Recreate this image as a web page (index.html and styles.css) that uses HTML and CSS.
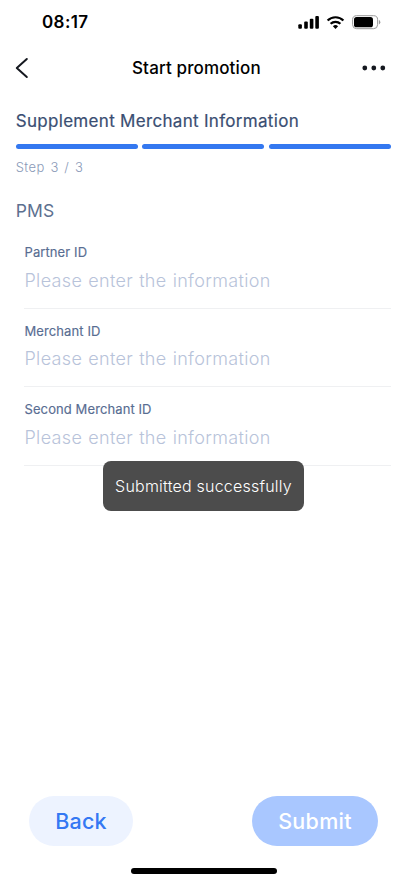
FILE: index.html
```html
<!DOCTYPE html>
<html lang="en">
<head>
<meta charset="utf-8">
<title>Start promotion</title>
<link rel="stylesheet" href="styles.css">
</head>
<body>
<div class="screen">
  <header class="status">
    <span class="time">08:17</span>
    <svg class="status-icons" width="84" height="16" viewBox="0 0 84 16">
      <rect x="0.3" y="9.2" width="3.6" height="4.6" rx="1"/>
      <rect x="6.2" y="6.6" width="3.6" height="7.2" rx="1"/>
      <rect x="11.8" y="3.8" width="3.6" height="10" rx="1"/>
      <rect x="17.3" y="1" width="3.6" height="12.8" rx="1"/>
      <g fill="none" stroke="#000" stroke-width="2.2">
        <path d="M29.6 5.5a11.2 11.2 0 0 1 15.8 0"/>
        <path d="M32.6 8.8a7 7 0 0 1 9.8 0"/>
      </g>
      <path d="M37.5 14l-2.6-2.7a3.8 3.8 0 0 1 5.2 0z"/>
      <rect x="54.6" y="0.7" width="25" height="13" rx="4" fill="none" stroke="#999"/>
      <rect x="56" y="2.1" width="19" height="10.2" rx="2.6"/>
      <path d="M80.9 5v4.4a2.4 2.4 0 0 0 0-4.4z" fill="#999"/>
    </svg>
  </header>
  <nav class="nav">
    <svg class="chevron" width="14" height="22" viewBox="0 0 14 22"><path d="M11.8 2L1.8 11l10 9" fill="none" stroke="#15181f" stroke-width="2" stroke-linecap="round" stroke-linejoin="round"/></svg>
    <h1 class="title">Start promotion</h1>
    <svg class="more" width="24" height="6" viewBox="0 0 24 6" fill="#15181f"><circle cx="2.8" cy="3" r="2.4"/><circle cx="11.8" cy="3" r="2.4"/><circle cx="20.8" cy="3" r="2.4"/></svg>
  </nav>
  <main class="content">
    <h2 class="heading">Supplement Merchant Information</h2>
    <div class="steps"><i></i><i></i><i></i></div>
    <p class="step-label">Step 3 / 3</p>
    <h3 class="section">PMS</h3>
    <div class="fields">
      <div class="field"><span class="label">Partner ID</span><span class="placeholder">Please enter the information</span></div>
      <div class="field"><span class="label">Merchant ID</span><span class="placeholder">Please enter the information</span></div>
      <div class="field"><span class="label">Second Merchant ID</span><span class="placeholder">Please enter the information</span></div>
    </div>
  </main>
  <footer class="actions">
    <div class="btn back">Back</div>
    <div class="btn submit">Submit</div>
  </footer>
  <div class="home"></div>
  <div class="toast">Submitted successfully</div>
</div>
</body>
</html>
```

FILE: styles.css
```css
* { box-sizing: border-box; margin: 0; padding: 0; }
body { background: #fff; font-family: Inter, "Liberation Sans", sans-serif; overflow: hidden; }
.screen { position: relative; width: 400px; height: 874px; display: flex; flex-direction: column; overflow: hidden; white-space: nowrap; }
.status { height: 44px; display: flex; justify-content: space-between; padding: 12px 18px 0 42px; flex: none; }
.time { font-size: 17px; font-weight: 600; line-height: 21px; letter-spacing: 0.4px; }
.status-icons { margin-top: 3px; }
.nav { height: 48px; display: flex; align-items: center; padding: 0 14px 0 15px; flex: none; }
.title { font-size: 17px; font-weight: 500; line-height: 24px; margin-left: 103px; letter-spacing: 0.14px; }
.more { margin-left: auto; }
.content { flex: 1; padding: 17px 9px 0 15.7px; }
.heading { font-size: 17px; font-weight: 400; line-height: 24px; letter-spacing: 0.31px; color: #3a4e72; -webkit-text-stroke: 0.2px #3a4e72; }
.steps { display: grid; grid-template-columns: repeat(3, 1fr); gap: 4.5px; margin-top: 11px; }
.steps i { height: 5px; border-radius: 2.5px; background: #3478f0; }
.step-label { margin-top: 8px; font-size: 13px; font-weight: 300; line-height: 20px; letter-spacing: 0.45px; word-spacing: 1.5px; color: #8a9ab8; }
.section { margin-top: 21px; font-size: 17.5px; font-weight: 400; line-height: 26px; letter-spacing: 0.2px; color: #5c7090; }
.fields { margin-left: 8.8px; margin-top: 6.6px; }
.field { height: 78.4px; padding-top: 11.6px; display: flex; flex-direction: column; border-bottom: 1.5px solid #eff0f2; }
.label { font-size: 13px; font-weight: 400; line-height: 20px; letter-spacing: 0.1px; color: #586d92; -webkit-text-stroke: 0.15px #586d92; }
.placeholder { margin-top: 5.6px; font-size: 18px; font-weight: 300; line-height: 26px; letter-spacing: 0.33px; word-spacing: 0.7px; color: #b8c3da; }
.actions { display: flex; justify-content: space-between; padding: 0 22px 0 29px; flex: none; }
.btn { height: 50px; border-radius: 25px; font-size: 21.5px; font-weight: 500; line-height: 51px; text-align: center; }
.back { width: 104px; background: #edf3ff; color: #3478f3; letter-spacing: 0.2px; }
.submit { width: 126px; background: #a9c7ff; color: #fff; letter-spacing: 0.3px; }
.home { width: 146px; height: 6px; border-radius: 3px; background: #000; margin: 22px 0 0 131px; flex: none; }
.toast { position: absolute; left: 103px; top: 461px; width: 201px; height: 50px; border-radius: 8px; background: #4c4c4c; color: #fff; font-size: 16px; font-weight: 300; line-height: 50px; letter-spacing: 0.22px; text-align: center; }
```
